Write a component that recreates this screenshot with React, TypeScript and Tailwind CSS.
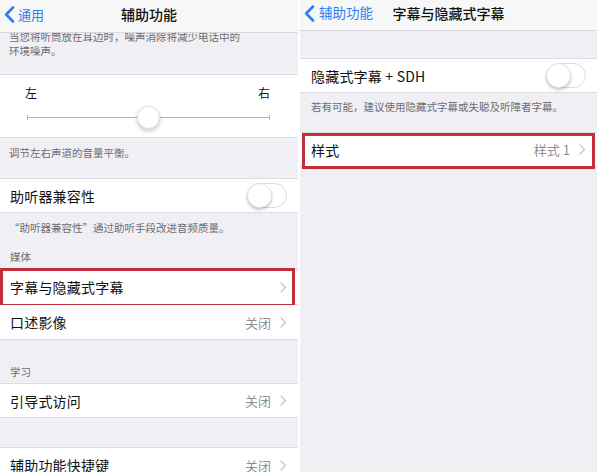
import React from "react";

const Chevron = () => (
  <svg width="7" height="11" viewBox="0 0 7 11" fill="none">
    <path d="M1 1l4.5 4.5L1 10" stroke="#c4c4c9" strokeWidth="1.3" strokeLinecap="round" strokeLinejoin="round" />
  </svg>
);

const BackChevron = () => (
  <svg width="11" height="17" viewBox="0 0 11 17" fill="none">
    <path d="M9 1.5L2.2 8.5 9 15.5" stroke="#2f7cf6" strokeWidth="2.6" strokeLinecap="round" strokeLinejoin="round" />
  </svg>
);

const Toggle = () => (
  <div className="relative w-[40px] h-[25px] rounded-full border border-[#dcdce0] bg-white">
    <div className="absolute left-[-1px] top-[-1px] w-[25px] h-[25px] rounded-full bg-white border border-[#e2e2e6] shadow-[0_2px_3px_rgba(0,0,0,0.22)]" />
  </div>
);

type RowProps = {
  label: string;
  value?: string;
  toggle?: boolean;
  chevron?: boolean;
  className?: string;
  red?: string;
};

function Row({ label, value, toggle, chevron, className = "", red }: RowProps) {
  return (
    <div className={`relative h-[35px] bg-white flex items-center pl-[10px] pr-[11px] shrink-0 ${className}`}>
      <span className="text-[14px] text-[#111] leading-none flex-1 tracking-[0.2px]">{label}</span>
      {value && <span className="text-[13px] text-[#8e8e93] leading-none mr-[9px]">{value}</span>}
      {chevron && <Chevron />}
      {toggle && <Toggle />}
      {red && <div className={`absolute border-[3px] border-[#c42d3a] pointer-events-none ${red}`} />}
    </div>
  );
}

const Footer = ({ children, className = "" }: { children: React.ReactNode; className?: string }) => (
  <div className={`px-[9px] text-[10.5px] leading-[14px] text-[#6d6d72] shrink-0 ${className}`}>{children}</div>
);

export default function App() {
  return (
    <div className="w-[597px] h-[472px] flex bg-white overflow-hidden font-['Noto_Sans_CJK_SC','Noto_Sans',sans-serif]">
      {/* Left panel */}
      <div className="w-[298px] h-full bg-[#efeff4] flex flex-col overflow-hidden shrink-0">
        <div className="relative h-[33px] bg-[#f7f7f7] border-b border-[#d6d6da] shrink-0">
          <div className="relative h-[28px] flex items-center">
            <div className="flex items-center pl-[4px] gap-[3px] text-[#2f7cf6] text-[13px] leading-none">
              <BackChevron />
              <span>通用</span>
            </div>
            <div className="absolute inset-0 flex items-center justify-center text-[14px] font-medium text-[#111] leading-none">
              辅助功能
            </div>
          </div>
        </div>
        <div className="h-[41px] overflow-hidden shrink-0">
          <Footer className="mt-[-3px]">
            当您将听筒放在耳边时，噪声消除将减少电话中的
            <br />
            环境噪声。
          </Footer>
        </div>
        <div className="h-[64px] bg-white border-y border-[#dcdce0] shrink-0 flex flex-col">
          <div className="flex justify-between pl-[25px] pr-[28px] pt-[10px] text-[12px] leading-[15px] text-[#111]">
            <span>左</span>
            <span>右</span>
          </div>
          <div className="relative ml-[27px] w-[243px] h-[24px] mt-[6px]">
            <div className="absolute left-0 right-0 top-[11px] h-px bg-[#b5b5b9]" />
            <div className="absolute left-0 top-[9px] w-px h-[5px] bg-[#b5b5b9]" />
            <div className="absolute right-0 top-[9px] w-px h-[5px] bg-[#b5b5b9]" />
            <div className="absolute left-[110px] top-0 w-[23px] h-[23px] rounded-full bg-white border border-[#e0e0e4] shadow-[0_2px_4px_rgba(0,0,0,0.22)]" />
          </div>
        </div>
        <Footer className="h-[40px] pt-[8px]">调节左右声道的音量平衡。</Footer>
        <Row label="助听器兼容性" toggle className="border-y border-[#dcdce0]" />
        <Footer className="pt-[8px]">“助听器兼容性”通过助听手段改进音频质量。</Footer>
        <Footer className="pt-[15px] pb-[5px] pl-[10px]">媒体</Footer>
        <Row label="字幕与隐藏式字幕" chevron className="border-t border-[#dcdce0]" red="top-[-2px] bottom-[-3px] left-0 right-[3px]" />
        <div className="h-px bg-white shrink-0 pl-[10px]"><div className="h-px bg-[#e0e0e4]" /></div>
        <Row label="口述影像" value="关闭" chevron className="border-b border-[#dcdce0]" />
        <Footer className="pt-[25px] pb-[4px] pl-[10px]">学习</Footer>
        <Row label="引导式访问" value="关闭" chevron className="border-y border-[#dcdce0]" />
        <div className="h-[29px] shrink-0" />
        <Row label="辅助功能快捷键" value="关闭" chevron className="border-t border-[#dcdce0]" />
      </div>

      <div className="w-[2px] h-full bg-white shrink-0" />

      {/* Right panel */}
      <div className="w-[297px] h-full bg-[#efeff4] flex flex-col overflow-hidden shrink-0">
        <div className="relative h-[31px] bg-[#f7f7f7] border-b border-[#d6d6da] shrink-0">
          <div className="relative h-[26px] flex items-center">
            <div className="flex items-center pl-[4px] gap-[4px] text-[#2f7cf6] text-[13.5px] leading-none">
              <BackChevron />
              <span>辅助功能</span>
            </div>
            <div className="absolute inset-0 flex items-center justify-center text-[14px] font-medium text-[#111] leading-none">
              字幕与隐藏式字幕
            </div>
          </div>
        </div>
        <div className="h-[27px] shrink-0" />
        <Row label="隐藏式字幕 + SDH" toggle className="border-y border-[#dcdce0] pl-[11px] pr-[11px]" />
        <Footer className="h-[39px] pt-[7px] pl-[11px]">若有可能，建议使用隐藏式字幕或失聪及听障者字幕。</Footer>
        <Row label="样式" value="样式 1" chevron className="border-y border-[#dcdce0] pl-[11px] pr-[10px]" red="top-0 bottom-[-3px] left-[2px] right-[2px]" />
      </div>
    </div>
  );
}
